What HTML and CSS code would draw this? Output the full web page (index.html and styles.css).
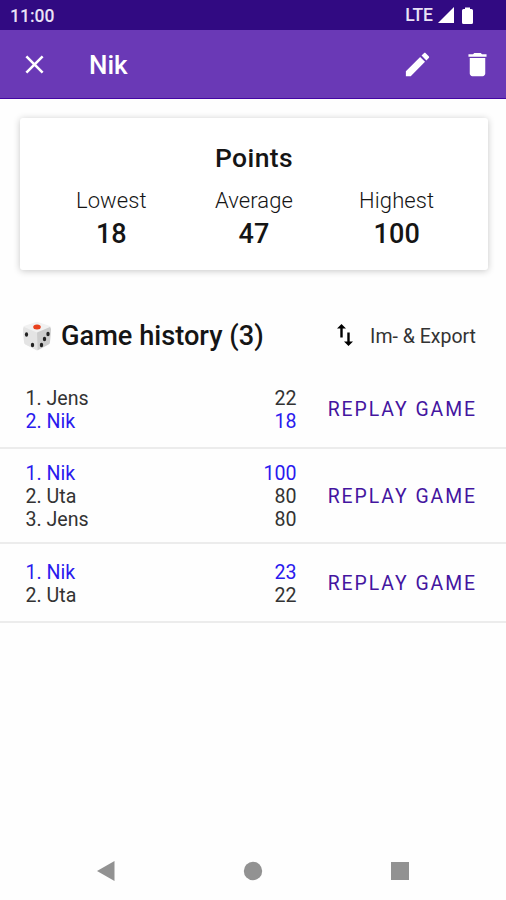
FILE: index.html
```html
<!DOCTYPE html>
<html lang="en">
<head>
    <meta charset="UTF-8">
    <meta name="viewport" content="width=device-width, initial-scale=1.0">
    <title>Nik</title>

    <link rel="stylesheet" href="styles.css">
</head>
<body>
    <div class="status-bar">
        <span class="time">11:00</span>
        <span class="network">LTE</span>
        <svg class="signal" viewBox="0 0 16 16"><path d="M0 16L16 0V16Z"/></svg>
        <svg class="battery" viewBox="0 0 11 17"><path d="M3 2V0.5H8V2H9.5Q11 2 11 3.5V15.5Q11 17 9.5 17H1.5Q0 17 0 15.5V3.5Q0 2 1.5 2Z"/></svg>
    </div>

    <header class="toolbar">
        <svg class="icon" viewBox="0 0 24 24"><path d="M19 6.41L17.59 5 12 10.59 6.41 5 5 6.41 10.59 12 5 17.59 6.41 19 12 13.41 17.59 19 19 17.59 13.41 12z"/></svg>
        <h1>Nik</h1>
        <svg class="icon" viewBox="0 0 24 24"><path d="M3 17.25V21h3.75L17.81 9.94l-3.75-3.75L3 17.25zM20.71 7.04c.39-.39.39-1.02 0-1.41l-2.34-2.34c-.39-.39-1.02-.39-1.41 0l-1.83 1.83 3.75 3.75 1.83-1.83z"/></svg>
        <svg class="icon delete-icon" viewBox="0 0 24 24"><path d="M6 19c0 1.100.9 2 2 2h8c1.100 0 2-.9 2-2V7H6v12zM19 4h-3.500l-1-1h-5l-1 1H5v2h14V4z"/></svg>
    </header>

    <section class="card">
        <h2>Points</h2>
        <div class="stats">
            <div class="stat"><span>Lowest</span><strong>18</strong></div>
            <div class="stat"><span>Average</span><strong>47</strong></div>
            <div class="stat"><span>Highest</span><strong>100</strong></div>
        </div>
    </section>

    <div class="history-header">
        <svg class="dice" viewBox="0 0 30 30">
            <path fill="#f1f1f1" d="M14 1Q15 .6 16 1L28 5Q29.300 6 29 8L28 21Q28 22.500 26.500 23.500L17 29Q15.500 29.700 14 29L3.500 23.500Q2 22.500 2 21L1 8Q.8 6 2 5Z"/>
            <path fill="#e4e4e4" d="M2 6L15 11.500L15.500 29.300Q14.500 29.400 14 29L3.500 23.500Q2 22.500 2 21L1 8Z"/>
            <path fill="#cccccc" d="M28 6L15 11.500L15.500 29.300L26.500 23.500Q28 22.500 28 21L29 8Z"/>
            <ellipse cx="15" cy="6" rx="3.800" ry="2.500" fill="#e8401c"/>
            <g fill="#222">
                <ellipse cx="4.500" cy="13.500" rx="1.600" ry="2.200"/>
                <ellipse cx="10.500" cy="24" rx="1.700" ry="2.300"/>
                <ellipse cx="26" cy="13" rx="1.700" ry="2.200"/>
                <ellipse cx="22.500" cy="18" rx="1.700" ry="2.200"/>
                <ellipse cx="19.500" cy="24" rx="1.700" ry="2.300"/>
            </g>
        </svg>
        <h2>Game history (3)</h2>
        <svg class="swap" viewBox="0 0 16 22"><path d="M3.300 13.500V4.500H0L4.500 0L9 4.500H5.700V13.500ZM10.300 8.500V17.500H7L11.500 22L16 17.500H12.700V8.500Z"/></svg>
        <span class="export">Im- &amp; Export</span>
    </div>

    <div class="game first-game">
        <div class="players">
            <div class="player"><span>1. Jens</span><span>22</span></div>
            <div class="player current"><span>2. Nik</span><span>18</span></div>
        </div>
        <button class="replay-button">REPLAY GAME</button>
    </div>
    <div class="game">
        <div class="players">
            <div class="player current"><span>1. Nik</span><span>100</span></div>
            <div class="player"><span>2. Uta</span><span>80</span></div>
            <div class="player"><span>3. Jens</span><span>80</span></div>
        </div>
        <button class="replay-button">REPLAY GAME</button>
    </div>
    <div class="game">
        <div class="players">
            <div class="player current"><span>1. Nik</span><span>23</span></div>
            <div class="player"><span>2. Uta</span><span>22</span></div>
        </div>
        <button class="replay-button">REPLAY GAME</button>
    </div>

    <nav class="nav-bar">
        <svg viewBox="0 0 20 20"><path d="M1 10L18.500 0V20Z"/></svg>
        <svg viewBox="0 0 20 20"><circle cx="10" cy="10" r="9.200"/></svg>
        <svg viewBox="0 0 20 20"><rect x="1" y="1" width="18" height="18"/></svg>
    </nav>
</body>
</html>
```

FILE: styles.css
```css
* {
    box-sizing: border-box;
}

body {
    margin: 0;
    height: 100vh;
    display: flex;
    flex-direction: column;
    background-color: #fefefe;
    color: #151515;
    font-family: Roboto, Arial, sans-serif;
    overflow: hidden;
}

h1, h2 {
    margin: 0;
    font-weight: 500;
}

.status-bar {
    height: 30px;
    padding: 0 33px 0 10px;
    display: flex;
    align-items: center;
    background-color: #310a82;
    color: #e9e2f6;
    font-size: 17.5px;
    font-weight: 500;
}

.time {
    flex: 1;
    padding-top: 2px;
}

.signal {
    width: 16px;
    height: 16px;
    margin-left: 5px;
    fill: white;
}

.battery {
    width: 11px;
    height: 17px;
    margin-left: 8px;
    fill: white;
}

.toolbar {
    height: 69px;
    padding: 0 13px 0 19px;
    display: flex;
    align-items: center;
    background-color: #6a39b6;
    border-bottom: 1px solid #4306a3;
    color: white;
}

.toolbar h1 {
    flex: 1;
    padding: 2px 0 0 39px;
    font-size: 26px;
}

.icon {
    width: 31px;
    height: 31px;
    fill: white;
}

.delete-icon {
    margin-left: 29px;
}

.card {
    width: 468px;
    height: 152px;
    margin: 19px 0 0 20px;
    padding: 24px 20px 0;
    background-color: white;
    border-radius: 3px;
    box-shadow: 0 1px 7px rgba(0, 0, 0, 0.22);
    text-align: center;
}

.card h2 {
    font-size: 26.5px;
    line-height: 32px;
    letter-spacing: 0.4px;
}

.stats {
    display: grid;
    grid-template-columns: repeat(3, 1fr);
    margin-top: 13px;
}

.stat {
    display: flex;
    flex-direction: column;
    font-size: 22px;
    line-height: 28px;
    font-weight: 300;
    letter-spacing: 0.1px;
}

.stat strong {
    font-size: 27px;
    line-height: 39px;
    font-weight: 500;
}

.history-header {
    height: 40px;
    margin-top: 46px;
    padding: 0 30px 0 22px;
    display: flex;
    align-items: center;
}

.dice {
    width: 30px;
    height: 30px;
}

.history-header h2 {
    flex: 1;
    margin-left: 9px;
    font-size: 27.2px;
}

.swap {
    width: 16px;
    height: 22px;
    margin: -2px 17px 0 0;
}

.export {
    color: #333;
    font-size: 19.5px;
    font-weight: 400;
}

.game {
    height: 94.5px;
    padding: 2px 29px 0 25.5px;
    display: flex;
    align-items: center;
    border-bottom: 2px solid #ececec;
    color: #333;
    font-size: 19.6px;
    line-height: 23px;
    font-weight: 400;
}

.first-game {
    height: 93px;
    padding-top: 16px;
}

.game:last-of-type {
    height: 79.5px;
    padding-top: 3px;
}

.players {
    width: 271px;
}

.player {
    display: flex;
    justify-content: space-between;
}

.current {
    color: #2a1aee;
}

.replay-button {
    flex: 1;
    padding: 0;
    background-color: transparent;
    border: none;
    color: #4415a0;
    font-family: inherit;
    font-size: 19.4px;
    font-weight: 400;
    letter-spacing: 1.95px;
    text-align: right;
    white-space: nowrap;
}

.nav-bar {
    margin-top: auto;
    height: 58px;
    padding: 0 96px;
    display: flex;
    align-items: center;
    justify-content: space-between;
}

.nav-bar svg {
    width: 20px;
    height: 20px;
    fill: #929292;
}
```
